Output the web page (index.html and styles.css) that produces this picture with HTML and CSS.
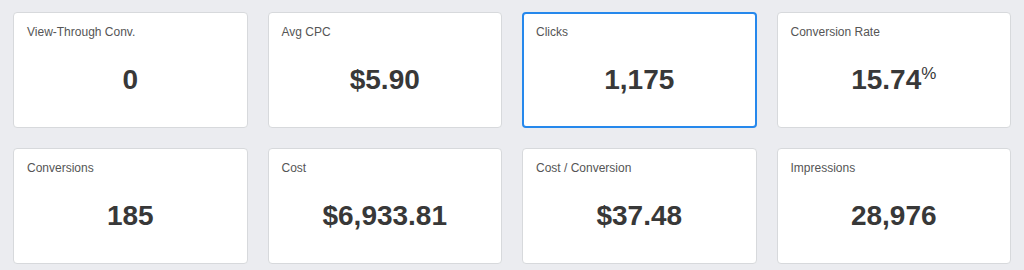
FILE: index.html
```html
<!DOCTYPE html>
<html lang="en">
<head>
  <meta charset="UTF-8">
  <meta name="viewport" content="width=device-width, initial-scale=1.0">
  <title>Metrics</title>
  <link rel="stylesheet" href="styles.css">
</head>
<body>

  <!-- Metric cards -->
  <div class="metrics">
    <div class="metric">
      <div class="metric-label">View-Through Conv.</div>
      <div class="metric-value">0</div>
    </div>
    <div class="metric">
      <div class="metric-label">Avg CPC</div>
      <div class="metric-value">$5.90</div>
    </div>
    <div class="metric active">
      <div class="metric-label">Clicks</div>
      <div class="metric-value">1,175</div>
    </div>
    <div class="metric">
      <div class="metric-label">Conversion Rate</div>
      <div class="metric-value">15.74<sup class="unit">%</sup></div>
    </div>
    <div class="metric">
      <div class="metric-label">Conversions</div>
      <div class="metric-value">185</div>
    </div>
    <div class="metric">
      <div class="metric-label">Cost</div>
      <div class="metric-value">$6,933.81</div>
    </div>
    <div class="metric">
      <div class="metric-label">Cost / Conversion</div>
      <div class="metric-value">$37.48</div>
    </div>
    <div class="metric">
      <div class="metric-label">Impressions</div>
      <div class="metric-value">28,976</div>
    </div>
  </div>

</body>
</html>
```

FILE: styles.css
```css
/* Base */
body {
  margin: 0;
  background-color: #ebecf0;
  font-family: "Liberation Sans", Arial, sans-serif;
}

/* Grid of cards */
.metrics {
  display: grid;
  grid-template-columns: repeat(4, 1fr);
  gap: 20px;
  padding: 12px 13px;
}

/* Card */
.metric {
  height: 116px;
  box-sizing: border-box;
  background-color: #fff;
  border: 1px solid #d7d9dc;
  border-radius: 4px;
  padding: 12px 13px;
  display: flex;
  flex-direction: column;
}
.metric.active {
  border: 2px solid #2688ec;
  padding: 11px 12px;
}

.metric-label {
  font-size: 12px;
  line-height: 14px;
  color: #555;
}

.metric-value {
  flex: 1;
  display: flex;
  align-items: center;
  justify-content: center;
  padding-top: 6px;
  font-size: 28px;
  font-weight: bold;
  color: #383838;
}

.unit {
  font-size: 17px;
  font-weight: normal;
  align-self: flex-start;
  margin-top: 20px;
  line-height: 1;
}
```
